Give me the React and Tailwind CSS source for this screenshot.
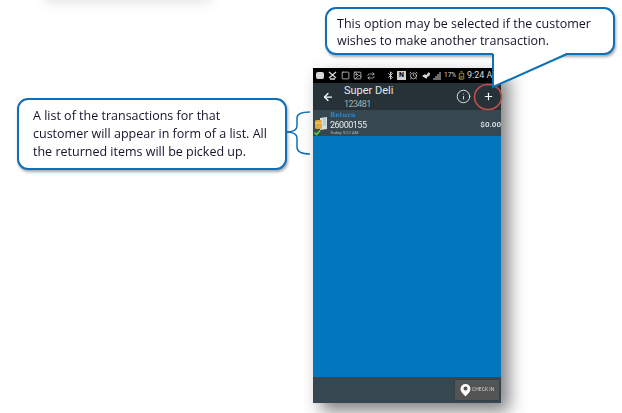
import { ArrowLeft, Plus, Info, Bluetooth, AlarmClock, Repeat, Image, Square, BatteryMedium } from 'lucide-react'

const blue = '#0f70b7'

function Callout({ className, children }) {
  return (
    <div className={`absolute bg-white border-2 border-[#0f70b7] rounded-[11px] shadow-[1px_2px_3px_rgba(0,0,0,0.35)] text-[#14142b] text-[12.500px] ${className}`}>
      {children}
    </div>
  )
}

function StatusBar() {
  return (
    <div className="h-[15px] bg-black flex items-center pl-[3px] text-[#d8d8d8] overflow-hidden whitespace-nowrap">
      <div className="w-[8px] h-[7px] bg-[#d8d8d8] rounded-[2px] mr-[4px]" />
      <svg width="9" height="9" viewBox="0 0 9 9" className="mr-[4px]" fill="none" stroke="#d8d8d8" strokeWidth="1.3">
        <path d="M1 1l7 6M8 1L1 7M2 8h5" />
      </svg>
      <Square size={9} strokeWidth={2} className="mr-[3px]" />
      <Image size={9} strokeWidth={2} className="mr-[5px]" />
      <Repeat size={8} strokeWidth={2} className="mr-[11px]" />
      <Bluetooth size={9} strokeWidth={2.5} className="mr-[2px]" />
      <div className="w-[9px] h-[9px] bg-[#cfcfcf] text-black text-[7px] leading-[9px] text-center font-bold mr-[3px]">N</div>
      <AlarmClock size={9} strokeWidth={2} className="mr-[4px]" />
      <svg width="10" height="9" viewBox="0 0 11 9" fill="#d8d8d8" className="mr-[1px]">
        <path d="M0 5l3-2 2 1 2-3 2 1-1 3-2 1-1 2-2-1z" />
      </svg>
      <svg width="8" height="8" viewBox="0 0 7 8" fill="#d8d8d8" className="mr-[3px]">
        <path d="M0 8h1V6H0zM2 8h1V4H2zM4 8h1V2H4zM6 8h1V0H6z" />
      </svg>
      <span className="text-[6.500px] w-[12px] mr-[1px]">17%</span>
      <BatteryMedium size={9} strokeWidth={2} className="-rotate-90 text-[#c9b24a] mr-[1px]" />
      <span className="text-[9px] leading-none">9:24 A</span>
    </div>
  )
}

function Phone() {
  return (
    <div className="w-[188px] h-[335px] flex flex-col shadow-[8px_8px_16px_rgba(0,0,0,0.5)] blur-[0.3px] font-['Roboto',sans-serif]">
      <StatusBar />

      {/* toolbar */}
      <div className="h-[27px] bg-[#263238] flex items-center text-white">
        <ArrowLeft size={12} strokeWidth={2.5} className="ml-[9px] mr-[10px]" />
        <div className="flex-1">
          <div className="text-[11px] leading-[13px] text-[#e4e7e8]">Super Deli</div>
          <div className="text-[9px] leading-[12px] tracking-[-0.6px] text-[#a5adb0] mt-[1px]">123481</div>
        </div>
        <Info size={15} strokeWidth={1.5} className="mr-[12px] text-[#e4e7e8]" />
        <Plus size={11} strokeWidth={2.5} className="mr-[7px]" />
      </div>

      {/* transaction row */}
      <div className="h-[26px] bg-[#37474f] flex text-white">
        <svg width="16" height="26" viewBox="0 0 16 26" className="shrink-0">
          <path d="M7 8l7-1v12l-7 1z" fill="#d5e0e4" />
          <path d="M10 9h3M10 11h3M10 13h3M10 15h3" stroke="#8fa3ab" strokeWidth="0.700" />
          <rect x="2" y="10" width="7" height="9" rx="1.500" fill="#e0a63a" />
          <path d="M2 13h7" stroke="#f6d27a" strokeWidth="1" />
          <path d="M1.500 22.500l2 2 3.500-4" fill="none" stroke="#5fd13c" strokeWidth="1.600" />
        </svg>
        <div className="flex-1 pl-[1px] pt-[1px]">
          <div className="text-[6.500px] leading-[8px] font-bold text-[#2f86cf] font-['DejaVu_Serif',serif]">Return</div>
          <div className="text-[9px] leading-[10px] tracking-[-0.5px] mt-[1px] text-[#e8eaeb]">26000155</div>
          <div className="text-[4.300px] leading-[6px] text-[#b5bcbf]">Today 9:22 AM</div>
        </div>
        <div className="text-[8px] font-bold text-[#d5d9db] pt-[9px]">$0.00</div>
      </div>

      <div className="flex-1 bg-[#0277bd]" />

      {/* footer */}
      <div className="h-[26px] bg-[#37474f] flex items-center justify-end pr-[2px]">
        <div className="w-[44px] h-[20px] bg-[#545454] flex items-center pl-[5px] gap-[1px] shadow-[0_0_1px_rgba(0,0,0,0.5)]">
          <svg width="11" height="13" viewBox="0 0 11 13" fill="white">
            <path d="M5.500 0a5 5 0 0 1 5 5c0 3-3 5-5 7.500C3.500 10 .5 8 .5 5a5 5 0 0 1 5-5z" />
            <circle cx="5.500" cy="4.500" r="2" fill="#545454" />
          </svg>
          <span className="text-[5px] text-[#cfcfcf] whitespace-nowrap">CHECK IN</span>
        </div>
      </div>
    </div>
  )
}

export default function App() {
  return (
    <div className="relative w-[622px] h-[413px] bg-white overflow-hidden pl-[313px] pt-[68px] font-['Open_Sans',sans-serif]">
      {/* leftover shadow of the page above */}
      <div className="absolute left-[45px] -top-[16px] w-[165px] h-[16px] shadow-[0_1px_14px_rgba(0,0,0,0.14)]" />

      <Phone />

      {/* pointers and red ring */}
      <svg className="absolute inset-0" width="622" height="413" fill="none">
        <ellipse cx="488" cy="97" rx="13.500" ry="12.500" stroke="#c0504d" strokeWidth="1.500" />
        <path d="M286 132c6 0 11-1 11-6v-8c0-4 4-6 13-6M286 132c6 0 11 1 11 6v9c0 5 4 7 13 7" stroke={blue} strokeWidth="1.500" />
      </svg>

      <Callout className="left-[17px] top-[98px] w-[270px] h-[72px] pl-[14px] pt-[7px] leading-[18px]">
        A list of the transactions for that
        <br />
        customer will appear in form of a list. All
        <br />
        the returned items will be picked up.
      </Callout>

      <Callout className="left-[325px] top-[7px] w-[290px] h-[48px] pl-[10px] pt-[6px] leading-[17px]">
        This option may be selected if the customer
        <br />
        wishes to make another transaction.
      </Callout>

      {/* tail of the top callout, sits on top of the bubble border */}
      <svg className="absolute left-[490px] top-[52px]" width="80" height="37" fill="none">
        <path d="M3 1L3 35L77 1z" fill="white" />
        <path d="M3 2L3 35L77 2" stroke={blue} strokeWidth="2" />
      </svg>
    </div>
  )
}
